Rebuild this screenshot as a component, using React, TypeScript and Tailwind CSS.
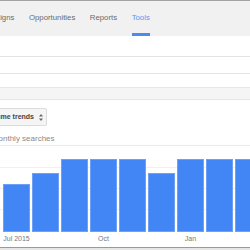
import React from "react";

const bars = [48, 59, 73, 73, 73, 59, 73, 73, 73];
const labels: Record<number, string> = { 0: "Jul 2015", 3: "Oct", 6: "Jan" };

export default function App() {
  return (
    <div className="w-[250px] h-[250px] overflow-hidden bg-white flex flex-col font-['Liberation_Sans',Arial,sans-serif]">
      <div className="h-[1px] bg-[#a3a3a3] shrink-0" />
      {/* tabs */}
      <div className="h-[35px] shrink-0 bg-[#f1f1f1] flex items-stretch gap-[14.5px] ml-[-25px] text-[7.8px] text-[#6b6b6b] whitespace-nowrap">
        <div className="flex items-center pt-[1px] border-b-[3px] border-transparent">Campaigns</div>
        <div className="flex items-center pt-[1px] border-b-[3px] border-transparent">Opportunities</div>
        <div className="flex items-center pt-[1px] border-b-[3px] border-transparent">Reports</div>
        <div className="flex items-center pt-[1px] border-b-[3px] border-[#4d8af0] text-[#5c95f2]">Tools</div>
      </div>

      <div className="h-[21px] shrink-0 border-b border-[#e3e3e3]" />
      <div className="h-[17px] shrink-0 border-b border-[#e3e3e3]" />
      <div className="h-[13px] shrink-0" />
      <div className="h-[13px] shrink-0 bg-[#f5f5f5] border-t border-b border-[#e6e6e6]" />

      <div className="pt-[8px] shrink-0">
        <div className="ml-[-10px] w-[57px] h-[18px] flex items-center justify-end gap-[5px] pr-[3px] bg-[#f5f5f5] border border-[#dcdcdc] rounded-[2px] text-[7px] font-bold text-[#444] whitespace-nowrap">
          <span>Search volume trends</span>
          <svg width="4" height="7" viewBox="0 0 4 7" className="shrink-0">
            <path d="M2 0 L4 2.5 L0 2.5 Z M2 7 L4 4.5 L0 4.5 Z" fill="#666" />
          </svg>
        </div>
      </div>

      <div className="h-[19px] shrink-0 flex items-center pt-[6px] ml-[-40px] text-[8px] text-[#8a8a8a] whitespace-nowrap">
        Average monthly searches
      </div>

      {/* chart */}
      <div className="relative h-[87px] shrink-0 border-t border-[#ececec]">
        <div className="absolute inset-x-0 top-[21px] border-t border-[#f0f0f0]" />
        <div className="absolute inset-x-0 top-[42px] border-t border-[#f0f0f0]" />
        <div className="absolute inset-x-0 top-[63px] border-t border-[#f0f0f0]" />
        <div className="relative h-full flex items-end gap-[2px] pl-[3px]">
          {bars.map((h, i) => (
            <div key={i} className="w-[27px] shrink-0 bg-[#4285f4] border border-[#6ea0f6]" style={{ height: h }} />
          ))}
        </div>
      </div>

      <div className="h-[15px] shrink-0 flex gap-[2px] pl-[3px] items-center text-[7px] text-[#777]">
        {bars.map((_, i) => (
          <div key={i} className="w-[27px] shrink-0 flex justify-center whitespace-nowrap">
            {labels[i] ?? ""}
          </div>
        ))}
      </div>

      <div className="h-[1px] shrink-0 bg-[#9a9a9a]" />
      <div className="flex-1 bg-[#e6e6e6]" />
    </div>
  );
}
